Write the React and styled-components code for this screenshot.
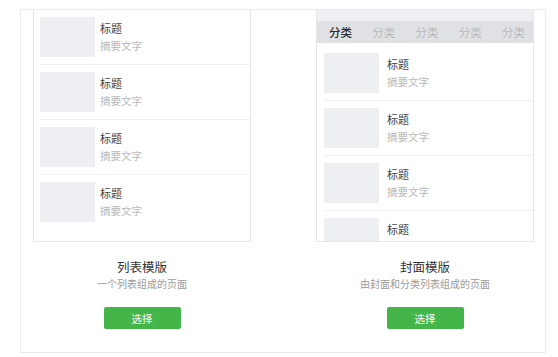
import React from 'react';
import styled, { createGlobalStyle } from 'styled-components';

const GlobalStyle = createGlobalStyle`
  body {
    margin: 0;
    background: #fff;
    font-family: "Noto Sans CJK SC", "Noto Sans", sans-serif;
  }
`;

const Panel = styled.div`
  margin: 9px 0 0 20px;
  width: 526px;
  height: 344px;
  box-sizing: border-box;
  border: 1px solid #ebebeb;
  display: grid;
  grid-template-columns: 218px 218px;
  column-gap: 65px;
  padding: 0 11px 0 12px;
`;

const Column = styled.div`
  display: flex;
  flex-direction: column;
  align-items: center;
`;

const Phone = styled.div`
  width: 218px;
  height: 232px;
  box-sizing: border-box;
  border: 1px solid #e6e6e6;
  border-top: none;
  overflow: hidden;
  background: #fff;
  align-self: stretch;
`;

const CoverStrip = styled.div`
  height: 11px;
  background: #eff0f3;
`;

const Tabs = styled.div`
  height: 22px;
  background: #e0e1e4;
  display: grid;
  grid-template-columns: repeat(5, 1fr);
  align-items: center;
`;

const Tab = styled.span`
  text-align: center;
  font-size: 11.5px;
  line-height: 22px;
  padding-left: 4px;
  color: ${(p) => (p.$active ? '#2b2b2b' : '#b9b9bc')};
  font-weight: ${(p) => (p.$active ? 500 : 400)};
`;

const List = styled.div`
  padding-top: ${(p) => p.$top || 0}px;
`;

const Row = styled.div`
  display: flex;
  align-items: flex-start;
  gap: ${(p) => p.$gap}px;
  padding: 7px 0;
  margin-left: ${(p) => p.$inset}px;
  border-bottom: 1px solid #efefef;

  &:last-child {
    border-bottom-color: transparent;
  }
`;

const Thumb = styled.div`
  width: 55px;
  height: 40px;
  flex: none;
  background: #eeeff3;
`;

const Texts = styled.div`
  display: flex;
  flex-direction: column;
  padding-top: 4px;
`;

const ItemTitle = styled.div`
  font-size: 11px;
  line-height: 14px;
  color: #444;
`;

const ItemDesc = styled.div`
  font-size: 10.5px;
  line-height: 14px;
  margin-top: 4px;
  color: #b8b8b8;
`;

const Name = styled.div`
  margin-top: 17px;
  font-size: 12.5px;
  line-height: 16px;
  color: #333;
`;

const Sub = styled.div`
  margin-top: 2px;
  font-size: 10px;
  line-height: 14px;
  color: #9a9a9a;
`;

const SelectButton = styled.button`
  margin-top: 16px;
  width: 77px;
  height: 22px;
  border: none;
  border-radius: 2px;
  background: #43b549;
  color: #fff;
  font-family: inherit;
  font-size: 10.5px;
  padding: 0;
  cursor: pointer;
`;

const Item = ({ inset, gap }) => (
  <Row $inset={inset} $gap={gap}>
    <Thumb />
    <Texts>
      <ItemTitle>标题</ItemTitle>
      <ItemDesc>摘要文字</ItemDesc>
    </Texts>
  </Row>
);

export default function App() {
  return (
    <>
      <GlobalStyle />
      <Panel>
        <Column>
          <Phone>
            <List>
              {[0, 1, 2, 3].map((i) => (
                <Item key={i} inset={6} gap={5} />
              ))}
            </List>
          </Phone>
          <Name>列表模版</Name>
          <Sub>一个列表组成的页面</Sub>
          <SelectButton>选择</SelectButton>
        </Column>
        <Column>
          <Phone>
            <CoverStrip />
            <Tabs>
              <Tab $active>分类</Tab>
              <Tab>分类</Tab>
              <Tab>分类</Tab>
              <Tab>分类</Tab>
              <Tab>分类</Tab>
            </Tabs>
            <List $top={3}>
              {[0, 1, 2, 3].map((i) => (
                <Item key={i} inset={7} gap={8} />
              ))}
            </List>
          </Phone>
          <Name>封面模版</Name>
          <Sub>由封面和分类列表组成的页面</Sub>
          <SelectButton>选择</SelectButton>
        </Column>
      </Panel>
    </>
  );
}
